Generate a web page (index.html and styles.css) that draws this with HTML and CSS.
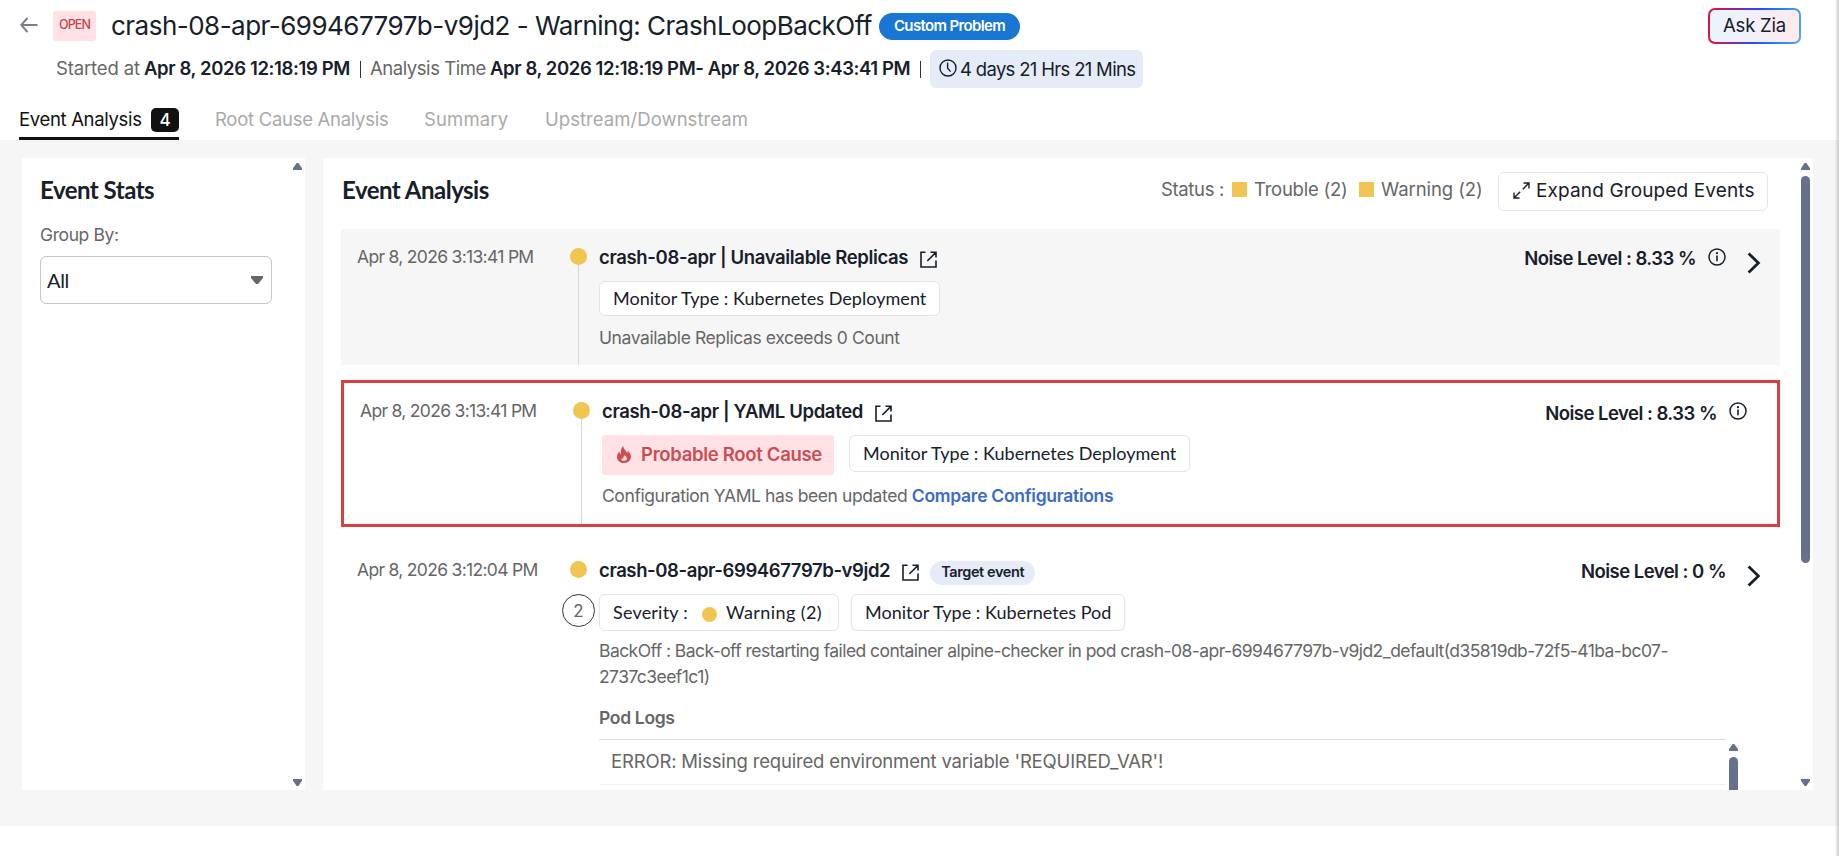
FILE: index.html
```html
<!DOCTYPE html>
<html lang="en">
<head>
    <meta charset="utf-8">
    <title>crash-08-apr-699467797b-v9jd2 - Event Analysis</title>
    <link rel="stylesheet" href="styles.css">
</head>
<body>
    <!-- shared icons -->
    <svg class="sprite">
        <symbol id="i-open" viewBox="0 0 17 17">
            <path d="M5.5 1.3H1v14.7h15V9.5M10.5 1.3H16v5.2M15.7 1.6L7.3 10" fill="none" stroke="currentColor" stroke-width="1.6"/>
        </symbol>
        <symbol id="i-info" viewBox="0 0 18 18">
            <circle cx="9" cy="9" r="8" fill="none" stroke="currentColor" stroke-width="1.5"/>
            <path d="M9 7.6V13.2" stroke="currentColor" stroke-width="1.6"/>
            <circle cx="9" cy="5.2" r="1.1" fill="currentColor"/>
        </symbol>
        <symbol id="i-chevron" viewBox="0 0 14 22">
            <path d="M1.6 1.4L11.4 11L1.6 20.6" fill="none" stroke="currentColor" stroke-width="2.8"/>
        </symbol>
    </svg>

    <header>
        <div class="title-row">
            <svg class="back" width="18" height="16" viewBox="0 0 18 16"><path d="M17.5 8H1.5M7.5 1L1.2 8L7.5 15" fill="none" stroke="#7a7f83" stroke-width="1.9"/></svg>
            <span class="state">OPEN</span>
            <h1>crash-08-apr-699467797b-v9jd2 - Warning: CrashLoopBackOff</h1>
            <span class="custom">Custom Problem</span>
            <button class="zia">Ask Zia</button>
        </div>
        <div class="meta-row">
            <span class="m-label">Started at</span>
            <b class="m-start">Apr 8, 2026 12:18:19 PM</b>
            <span class="bar"></span>
            <span class="m-time">Analysis Time</span>
            <b class="m-range">Apr 8, 2026 12:18:19 PM- Apr 8, 2026 3:43:41 PM</b>
            <span class="bar last"></span>
            <span class="duration">
                <svg width="18" height="18" viewBox="0 0 18 18"><g fill="none" stroke="#17202a" stroke-width="1.4"><circle cx="9" cy="9" r="8"/><path d="M8.6 3.5V9.3L11.6 12.6"/></g></svg>
                <span>4 days 21 Hrs 21 Mins</span>
            </span>
        </div>
        <nav>
            <a class="active"><span>Event Analysis</span><i>4</i></a>
            <a class="rca">Root Cause Analysis</a>
            <a class="summary">Summary</a>
            <a class="stream">Upstream/Downstream</a>
        </nav>
    </header>

    <main>
        <aside class="panel">
            <div class="stats">
                <h2>Event Stats</h2>
                <label>Group By:</label>
                <div class="select">All<span class="caret"></span></div>
            </div>
            <div class="scroll"><span class="up"></span><span class="down"></span></div>
        </aside>

        <section class="panel">
            <div class="content">
                <div class="toolbar">
                    <h2>Event Analysis</h2>
                    <div class="legend">
                        <span class="l-status">Status :</span>
                        <span class="l-trouble">Trouble (2)</span>
                        <span class="l-warning">Warning (2)</span>
                    </div>
                    <button class="expand">
                        <svg width="17" height="17" viewBox="0 0 17 17"><path d="M10.5 1H16v5.5M15.5 1.5L9.8 7.2M6.5 16H1v-5.5M1.5 15.5L7.2 9.8" fill="none" stroke="#17202a" stroke-width="1.4"/></svg>
                        <span>Expand Grouped Events</span>
                    </button>
                </div>

                <div class="event grey">
                    <time>Apr 8, 2026 3:13:41 PM</time>
                    <div class="rail"><span class="dot"></span><span class="line"></span></div>
                    <div class="body">
                        <div class="head">
                            <h3>crash-08-apr | Unavailable Replicas</h3>
                            <svg class="ext"><use href="#i-open"/></svg>
                            <span class="noise">Noise Level : 8.33 %</span>
                            <svg class="info"><use href="#i-info"/></svg>
                        </div>
                        <div class="chips"><span class="chip low">Monitor Type : Kubernetes Deployment</span></div>
                        <p class="desc">Unavailable Replicas exceeds 0 Count</p>
                    </div>
                    <svg class="chevron"><use href="#i-chevron"/></svg>
                </div>

                <div class="event cause">
                    <time>Apr 8, 2026 3:13:41 PM</time>
                    <div class="rail"><span class="dot"></span><span class="line"></span></div>
                    <div class="body">
                        <div class="head">
                            <h3>crash-08-apr | YAML Updated</h3>
                            <svg class="ext"><use href="#i-open"/></svg>
                            <span class="noise">Noise Level : 8.33 %</span>
                            <svg class="info"><use href="#i-info"/></svg>
                        </div>
                        <div class="chips">
                            <span class="root">
                                <svg width="14" height="17" viewBox="0 0 14 17"><path d="M6.2 0C6.6 3.4 9.2 4.4 10 7.2C10.6 6.6 10.8 5.6 10.7 4.6C12.8 6.3 14 8.6 14 10.8C14 14.4 11 17 7 17S0 14.4 0 10.9C0 8.6 1 6.9 2.4 5.4C2.5 7 3 7.8 3.8 8.2C3.4 4.8 4.2 1.8 6.2 0Z" fill="#cb4f52"/><path d="M7 14.8C5.2 14.8 4.2 13.7 4.2 12.4C5 12.9 5.8 12.7 6.3 12C6.9 11.1 6.5 10.2 7 9.2C8.8 10 9.9 11.2 9.9 12.5C9.9 13.8 8.8 14.8 7 14.8Z" fill="#ffe1e6"/></svg>
                                <span>Probable Root Cause</span>
                            </span>
                            <span class="chip">Monitor Type : Kubernetes Deployment</span>
                        </div>
                        <p class="desc">Configuration YAML has been updated <a>Compare Configurations</a></p>
                    </div>
                </div>

                <div class="event">
                    <time>Apr 8, 2026 3:12:04 PM</time>
                    <div class="rail"><span class="dot"></span><span class="count">2</span></div>
                    <div class="body">
                        <div class="head">
                            <h3 class="pod">crash-08-apr-699467797b-v9jd2</h3>
                            <svg class="ext"><use href="#i-open"/></svg>
                            <span class="target">Target event</span>
                            <span class="noise">Noise Level : 0 %</span>
                        </div>
                        <div class="chips">
                            <span class="chip severity"><span class="label">Severity :</span><span class="dot small"></span>Warning (2)</span>
                            <span class="chip kind">Monitor Type : Kubernetes Pod</span>
                        </div>
                        <p class="desc long">BackOff : Back-off restarting failed container alpine-checker in pod crash-08-apr-699467797b-v9jd2_default(d35819db-72f5-41ba-bc07-<br>2737c3eef1c1)</p>
                        <h4>Pod Logs</h4>
                        <div class="logs">
                            <div class="log-lines"><p>ERROR: Missing required environment variable 'REQUIRED_VAR'!</p></div>
                            <div class="log-scroll"><span class="up"></span><span class="thumb"></span></div>
                        </div>
                    </div>
                    <svg class="chevron"><use href="#i-chevron"/></svg>
                </div>
            </div>
            <div class="scroll"><span class="up"></span><span class="thumb"></span><span class="down"></span></div>
        </section>
    </main>
</body>
</html>
```
FILE: styles.css
```css
* {
    margin: 0;
    padding: 0;
    box-sizing: border-box;
}
body {
    width: 1839px;
    height: 856px;
    overflow: hidden;
    background: #fff;
    color: #17202a;
    font-family: Inter, Roboto, sans-serif;
    font-size: 18.5px;
    position: relative;
}
/* edge of the slide-in pane */
body::after {
    content: '';
    position: absolute;
    top: 0;
    right: 0;
    width: 4px;
    height: 100%;
    background: linear-gradient(to right, rgba(0, 0, 0, 0), rgba(0, 0, 0, 0.2));
}
svg {
    flex: none;
    display: block;
}
.sprite {
    position: absolute;
    width: 0;
    height: 0;
}
button {
    font: inherit;
    color: inherit;
}
h1, h2, h3, h4, span, b, a, time, label {
    white-space: nowrap;
}

/* header */
header {
    height: 140px;
}
.title-row {
    display: flex;
    align-items: center;
    height: 50px;
    padding: 2px 38px 0 20px;
}
.back {
    margin-top: -3px;
}
.state {
    width: 43px;
    height: 30px;
    margin-left: 15px;
    line-height: 27px;
    text-align: center;
    background: #ffe1e6;
    color: #c0474b;
    border-radius: 3px;
    font-size: 12.5px;
    font-weight: 500;
    letter-spacing: -0.9px;
}
h1 {
    width: 768px;
    margin-left: 15px;
    padding-bottom: 2px;
    font-size: 26px;
    font-weight: 400;
    letter-spacing: -0.52px;
}
.custom {
    width: 141px;
    height: 27px;
    line-height: 26px;
    text-align: center;
    border-radius: 14px;
    background: #1976d2;
    color: #fff;
    font-size: 15px;
    font-weight: 600;
    letter-spacing: -0.65px;
}
.zia {
    width: 93px;
    height: 36px;
    margin-left: auto;
    padding-bottom: 2px;
    border: 2px solid transparent;
    border-radius: 7px;
    background: linear-gradient(100deg, #e6f6ff, #f3effb 50%, #ffe9e9) padding-box, linear-gradient(100deg, #d9143e 10%, #2f45ff 50%, #1b86f5 75%, #5aa9ef) border-box;
    letter-spacing: -0.2px;
}
.meta-row {
    display: flex;
    align-items: center;
    height: 38px;
    padding-left: 56px;
}
.m-label, .m-time {
    color: #666;
}
.m-label {
    width: 88px;
    letter-spacing: -0.15px;
}
.meta-row > .m-label, .meta-row > .m-time, .meta-row b {
    padding-bottom: 2px;
}
.meta-row b {
    font-weight: 600;
}
.m-start {
    width: 216px;
    letter-spacing: -0.37px;
}
.bar {
    width: 1px;
    height: 17px;
    margin-right: 9px;
    background: #333;
}
.m-time {
    width: 120px;
    letter-spacing: -0.45px;
}
.m-range {
    width: 430px;
    letter-spacing: -0.4px;
}
.duration {
    display: flex;
    align-items: center;
    gap: 3px;
    width: 213px;
    height: 38px;
    padding-left: 9px;
    background: #e5ecf8;
    border-radius: 6px;
    letter-spacing: -0.68px;
}
.duration svg {
    margin-top: -2px;
}
nav {
    display: flex;
    gap: 36px;
    padding: 10px 0 0 19px;
    color: #aaa;
}
nav a {
    height: 42px;
    line-height: 42px;
}
nav .active {
    display: flex;
    align-items: center;
    gap: 10px;
    width: 160px;
    color: #111;
    letter-spacing: -0.33px;
    border-bottom: 3px solid #111;
}
.active span {
    width: 122px;
    padding-top: 3px;
}
.active i {
    width: 28px;
    height: 24px;
    margin-top: 5px;
    line-height: 24px;
    text-align: center;
    font-style: normal;
    font-size: 17px;
    font-weight: 500;
    color: #fff;
    background: #111;
    border-radius: 5px;
}
nav .rca {
    width: 173px;
    letter-spacing: -0.28px;
}
nav .summary {
    width: 85px;
    letter-spacing: 0.15px;
}
nav .stream {
    letter-spacing: 0.05px;
}

/* panels */
main {
    display: flex;
    gap: 18px;
    height: 686px;
    padding: 18px 26px 36px 22px;
    background: #f6f6f6;
}
.panel {
    display: flex;
    height: 632px;
    background: #fff;
    overflow: hidden;
}
aside.panel {
    width: 283px;
}
section.panel {
    width: 1490px;
}
h2 {
    font: 700 24px/32px Lato, sans-serif;
    letter-spacing: -0.5px;
}
.scroll {
    display: flex;
    flex-direction: column;
    width: 9px;
    margin: 5px 3px 4px auto;
}
.up, .down {
    flex: none;
    width: 9px;
    height: 7px;
    background: #68718c;
    clip-path: polygon(40% 0, 60% 0, 100% 75%, 100% 100%, 0 100%, 0 75%);
}
.down {
    margin-top: auto;
    transform: rotate(180deg);
}
.scroll .thumb {
    height: 387px;
    margin-top: 6px;
    border-radius: 5px;
    background: #68718c;
}
.stats {
    padding: 16px 0 0 18px;
}
.stats label {
    display: block;
    margin-top: 17px;
    line-height: 24px;
    font-size: 17.5px;
    color: #666;
    letter-spacing: -0.4px;
}
.select {
    display: flex;
    align-items: center;
    justify-content: space-between;
    width: 232px;
    height: 48px;
    margin-top: 9px;
    padding: 0 8px 0 6px;
    border: 1px solid #c6c6c6;
    border-radius: 6px;
    font: 20px Lato, sans-serif;
    letter-spacing: -0.3px;
}
.caret {
    width: 12px;
    height: 8px;
    background: #666;
    clip-path: polygon(0 0, 100% 0, 100% 25%, 58% 100%, 42% 100%, 0 25%);
}

/* event list */
.content {
    width: 1457px;
    padding-left: 18px;
}
.toolbar {
    display: flex;
    align-items: center;
    height: 63px;
    margin-bottom: 8px;
    padding: 0 12px 0 1px;
}
.legend {
    display: flex;
    align-items: center;
    margin-left: auto;
    padding-bottom: 1px;
    color: #666;
}
.l-status {
    width: 71px;
    letter-spacing: -0.35px;
}
.l-trouble, .l-warning {
    display: flex;
    align-items: center;
    letter-spacing: -0.25px;
    width: 127px;
}
.l-warning {
    width: 139px;
    letter-spacing: -0.08px;
}
.l-trouble::before, .l-warning::before {
    content: '';
    width: 15px;
    height: 15px;
    margin-right: 7px;
    background: #f0c551;
}
.expand {
    display: flex;
    align-items: center;
    gap: 6px;
    width: 270px;
    height: 39px;
    margin-top: 4px;
    padding: 0 0 2px 14px;
    border: 1px solid #e4e4e4;
    border-radius: 6px;
    background: #fff;
    font-size: 19px;
    letter-spacing: 0.13px;
}
.event {
    display: flex;
    width: 1439px;
    padding: 16px 20px 0 16px;
    margin-bottom: 15px;
}
.grey {
    height: 136px;
    background: #f6f6f6;
}
.cause {
    height: 147px;
    padding-right: 30px;
    border: 3px solid #dc3d3d;
}
time {
    width: 213px;
    line-height: 24px;
    font-size: 17.5px;
    color: #666;
    letter-spacing: -0.69px;
}
.rail {
    display: flex;
    flex-direction: column;
    align-items: center;
    width: 17px;
    margin-right: 12px;
}
.dot {
    flex: none;
    width: 17px;
    height: 17px;
    margin-top: 3px;
    border-radius: 50%;
    background: #f0c551;
}
.line {
    flex: 1;
    width: 1px;
    background: #d8d8d8;
}
.count {
    width: 33px;
    height: 33px;
    margin-top: 16px;
    line-height: 32px;
    text-align: center;
    border: 1px solid #333;
    border-radius: 50%;
    font-size: 17px;
    color: #666;
}
.body {
    flex: 1;
    min-width: 0;
}
.head {
    display: flex;
    align-items: center;
    height: 24px;
}
h3 {
    font-size: 18.5px;
    font-weight: 600;
    letter-spacing: -0.35px;
}
h3.pod {
    letter-spacing: -0.4px;
}
.ext {
    width: 17px;
    height: 17px;
    margin: 4px 0 0 12px;
}
.noise {
    margin-left: auto;
    padding-top: 1px;
    font-weight: 600;
    letter-spacing: -0.52px;
}
.cause .noise {
    padding-top: 3px;
}
.info {
    width: 18px;
    height: 18px;
    margin-left: 12px;
}
.chevron {
    width: 14px;
    height: 22px;
    margin: 7px -1px 0 21px;
}
.target {
    width: 105px;
    height: 24px;
    margin: 5px 0 0 11px;
    line-height: 22px;
    text-align: center;
    border-radius: 12px;
    background: #e5ecf8;
    font-size: 14.5px;
    font-weight: 600;
    letter-spacing: -0.4px;
}
.chips {
    display: flex;
    gap: 15px;
    margin-top: 12px;
}
.event:last-child .chips {
    gap: 12px;
}
.chip {
    height: 37px;
    padding: 0 13px;
    line-height: 35px;
    border: 1px solid #e4e4e4;
    border-radius: 6px;
    background: #fff;
    font-family: Lato, sans-serif;
    font-size: 18px;
    letter-spacing: 0.03px;
}
.chip.low {
    height: 35px;
    line-height: 33px;
}
.severity {
    display: flex;
    align-items: center;
    width: 240px;
    letter-spacing: 0.4px;
}
.severity .label {
    width: 89px;
    letter-spacing: 0.2px;
}
.severity .dot {
    width: 15px;
    height: 15px;
    margin-right: 9px;
}
.kind {
    width: 274px;
}
.root {
    display: flex;
    align-items: center;
    gap: 10px;
    width: 232px;
    height: 40px;
    padding: 0 0 2px 15px;
    border-radius: 3px;
    background: #ffe1e6;
    color: #cb4f52;
    font-weight: 600;
    letter-spacing: -0.3px;
}
.desc {
    margin-top: 9px;
    line-height: 26px;
    font-size: 17.5px;
    color: #666;
    letter-spacing: -0.41px;
    white-space: nowrap;
}
.desc a {
    color: #3a6bc8;
    font-weight: 600;
    letter-spacing: -0.28px;
}
.cause .desc {
    margin-top: 8px;
}
.desc.long {
    margin-top: 7px;
    letter-spacing: -0.56px;
}
h4 {
    margin-top: 15px;
    padding-top: 1px;
    line-height: 23px;
    font-size: 17.5px;
    font-weight: 600;
    color: #666;
    letter-spacing: -0.33px;
}
.logs {
    display: flex;
    gap: 3px;
    height: 140px;
    margin: 10px -12px 0 0;
    color: #666;
}
.log-lines {
    flex: 1;
    border-top: 1px solid #ddd;
}
.log-lines p {
    height: 45px;
    padding-left: 12px;
    line-height: 42px;
    border-bottom: 1px solid #f1f1f1;
    letter-spacing: -0.17px;
}
.log-scroll {
    display: flex;
    flex-direction: column;
    width: 9px;
    padding-top: 5px;
}
.log-scroll .thumb {
    flex: 1;
    margin-top: 6px;
    border-radius: 5px;
    background: #68718c;
}
```
